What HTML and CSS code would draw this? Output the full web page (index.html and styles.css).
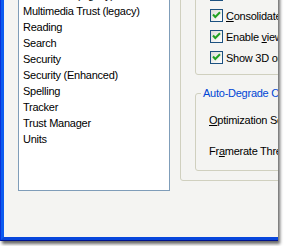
FILE: index.html
```html
<!DOCTYPE html>
<html>
<head>
<meta charset="utf-8">
<link rel="stylesheet" href="styles.css">
</head>
<body>
<div class="window">
  <div class="frame">
    <div class="page">
      <ul class="list">
        <li>Measuring (Geo)</li>
        <li>Multimedia (legacy)</li>
        <li>Multimedia Trust (legacy)</li>
        <li>Reading</li>
        <li>Search</li>
        <li>Security</li>
        <li>Security (Enhanced)</li>
        <li>Spelling</li>
        <li>Tracker</li>
        <li>Trust Manager</li>
        <li>Units</li>
      </ul>
      <div class="panel">
        <div class="group">
          <label class="check"><span class="box"><svg viewBox="0 0 11 11" width="11" height="11"><path d="M2 4.5 L4.3 7 L9 2.3" /></svg></span><span>Enable double-sided rendering</span></label>
          <label class="check"><span class="box"><svg viewBox="0 0 11 11" width="11" height="11"><path d="M2 4.5 L4.3 7 L9 2.3" /></svg></span><span><u>C</u>onsolidate tool bar</span></label>
          <label class="check"><span class="box"><svg viewBox="0 0 11 11" width="11" height="11"><path d="M2 4.5 L4.3 7 L9 2.3" /></svg></span><span>Enable <u>v</u>iew transitions</span></label>
          <label class="check"><span class="box"><svg viewBox="0 0 11 11" width="11" height="11"><path d="M2 4.5 L4.3 7 L9 2.3" /></svg></span><span>Show 3D orientation axis</span></label>
        </div>
        <fieldset class="degrade">
          <legend>Auto-Degrade Options</legend>
          <div class="field"><u>O</u>ptimization Scheme for Low Framerate</div>
          <div class="field">Fr<u>a</u>merate Threshold</div>
        </fieldset>
      </div>
    </div>
  </div>
</div>
</body>
</html>
```
FILE: styles.css
```css
html, body {
  margin: 0;
  padding: 0;
  background: #ffffff;
  overflow: hidden;
  width: 284px;
  height: 246px;
}

body {
  font-family: "Liberation Sans", Arial, sans-serif;
  font-size: 11px;
  letter-spacing: -0.25px;
  color: #000000;
}

.window {
  margin-top: -40px;
  width: 278px;
  height: 281px;
  box-sizing: border-box;
  border-left: 1px solid #0831d9;
  border-bottom: 1px solid #00138c;
  box-shadow: 2px 3px 3px rgba(0, 0, 0, 0.6);
}

.frame {
  height: 100%;
  box-sizing: border-box;
  border-left: 3px solid #0b5bf0;
  border-bottom: 3px solid #0846dc;
}

.page {
  height: 100%;
  background: #f4f4f2;
  display: flex;
  align-items: flex-end;
  overflow: hidden;
}

.list {
  flex-shrink: 0;
  list-style: none;
  margin: 0 0 46px 14px;
  padding: 0 0 43px 0;
  width: 152px;
  box-sizing: border-box;
  border: 1px solid #7f9db9;
  background: #ffffff;
}

.list li {
  height: 16px;
  line-height: 16px;
  padding-left: 4px;
  white-space: nowrap;
}

.panel {
  flex-shrink: 0;
  width: 200px;
  margin: 0 0 56px 10px;
  padding: 0 0 9px 14px;
  border: 1px solid #d0d0bf;
  border-radius: 3px;
}

.group {
  border: 1px solid #d0d0bf;
  border-radius: 3px;
  padding: 0 0 6px 14px;
}

.check {
  display: flex;
  align-items: center;
  height: 21px;
  white-space: nowrap;
}

.box {
  flex-shrink: 0;
  width: 13px;
  height: 13px;
  box-sizing: border-box;
  border: 1px solid #1c5180;
  background: linear-gradient(135deg, #dcdcd7 0%, #f2f2ef 60%, #ffffff 100%);
  margin-right: 3px;
  display: flex;
  align-items: center;
  justify-content: center;
}

.box svg {
  display: block;
}

.box path {
  fill: none;
  stroke: #21a121;
  stroke-width: 2;
}

.degrade {
  margin: 11px 0 0 0;
  padding: 10px 0 9px 5px;
  border: 1px solid #d0d0bf;
  border-radius: 3px;
  min-width: 0;
}

.degrade legend {
  padding: 0 2px;
  line-height: 14px;
  color: #0046d5;
  white-space: nowrap;
}

.field {
  height: 20px;
  line-height: 20px;
  padding-left: 8px;
  white-space: nowrap;
}

.field + .field {
  margin-top: 11px;
}
```
